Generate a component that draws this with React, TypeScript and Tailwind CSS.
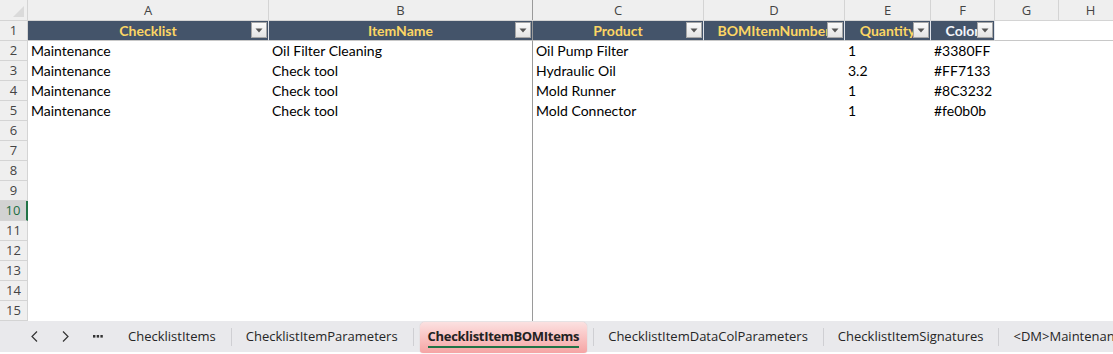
import React from 'react';

const cols = [
  { key: 'A', w: 241, title: 'Checklist' },
  { key: 'B', w: 264, title: 'ItemName', frozen: true },
  { key: 'C', w: 171, title: 'Product' },
  { key: 'D', w: 141, title: 'BOMItemNumber' },
  { key: 'E', w: 86, title: 'Quantity' },
  { key: 'F', w: 64, title: 'Color', white: true },
  { key: 'G', w: 64 },
  { key: 'H', w: 64 },
];

const rows: string[][] = [
  ['Maintenance', 'Oil Filter Cleaning', 'Oil Pump Filter', '', '1', '#3380FF'],
  ['Maintenance', 'Check tool', 'Hydraulic Oil', '', '3.2', '#FF7133'],
  ['Maintenance', 'Check tool', 'Mold Runner', '', '1', '#8C3232'],
  ['Maintenance', 'Check tool', 'Mold Connector', '', '1', '#fe0b0b'],
];

const tabs = [
  'ChecklistItems',
  'ChecklistItemParameters',
  'ChecklistItemBOMItems',
  'ChecklistItemDataColParameters',
  'ChecklistItemSignatures',
  '<DM>MaintenanceChecklists',
];

const FilterButton = () => (
  <div className="absolute right-[1px] top-[1px] w-[16px] h-[16px] border border-[#a6a6a6] bg-gradient-to-b from-[#fbfbfb] to-[#e3e3e3] flex items-center justify-center">
    <svg width="8" height="5" viewBox="0 0 8 5">
      <path d="M0.5 0.5 L7.5 0.5 L4 4.5 Z" fill="#555" />
    </svg>
  </div>
);

const App: React.FC = () => {
  const rowNums = Array.from({ length: 15 }, (_, i) => i + 1);
  return (
    <div className="w-[1113px] h-[354px] bg-white overflow-hidden font-['Lato',sans-serif] text-[14px] text-black">
      <div className="h-[321px] overflow-hidden">
        {/* Column letters */}
        <div className="flex h-[21px] bg-[#efefef] border-b border-[#d4d4d4]">
          <div className="w-[28px] shrink-0 border-r border-[#d4d4d4] relative">
            <svg className="absolute right-[3px] bottom-[3px]" width="11" height="11" viewBox="0 0 11 11">
              <path d="M11 0 L11 11 L0 11 Z" fill="#dadada" />
            </svg>
          </div>
          {cols.map((c) => (
            <div
              key={c.key}
              style={{ width: c.w }}
              className={`shrink-0 border-r ${c.frozen ? 'border-[#9a9a9a]' : 'border-[#d4d4d4]'} flex items-center justify-center text-[13px] text-[#444] font-['Open_Sans',sans-serif] pt-[1px]`}
            >
              {c.key}
            </div>
          ))}
        </div>

        {rowNums.map((n) => (
          <div key={n} className="flex h-[20px]">
            <div
              className={`w-[28px] shrink-0 border-b border-[#d4d4d4] flex items-center justify-center text-[13px] font-['Open_Sans',sans-serif] ${
                n === 10 ? 'bg-[#d2d2d2] text-[#1e6e42] border-r-2 border-r-[#217346]' : 'bg-[#efefef] text-[#444] border-r border-r-[#d4d4d4]'
              }`}
            >
              {n}
            </div>
            {cols.map((c, ci) => {
              if (n === 1) {
                return c.title ? (
                  <div
                    key={c.key}
                    style={{ width: c.w }}
                    className={`shrink-0 relative bg-[#44546a] border-r ${c.frozen ? 'border-[#9a9a9a]' : 'border-[#dfe3ea]'} border-b border-b-[#c8c8c8] overflow-hidden flex items-center justify-center font-bold whitespace-nowrap ${
                      c.white ? 'text-[#f4f6fb]' : 'text-[#fcd664]'
                    }`}
                  >
                    <span>{c.title}</span>
                    <FilterButton />
                  </div>
                ) : (
                  <div key={c.key} style={{ width: c.w }} className="shrink-0 border-b border-[#c8c8c8]" />
                );
              }
              const v = rows[n - 2]?.[ci] ?? '';
              return (
                <div
                  key={c.key}
                  style={{ width: c.w }}
                  className={`shrink-0 pl-[3px] pb-[2px] flex items-center whitespace-nowrap ${c.frozen ? 'border-r border-[#9a9a9a]' : ''}`}
                >
                  {v}
                </div>
              );
            })}
          </div>
        ))}
      </div>

      {/* Sheet tabs */}
      <div className="h-[33px] bg-[#e9e9ec] border-b-2 border-white flex items-center font-['Open_Sans',sans-serif] text-[13px] text-[#262626] whitespace-nowrap">
        <div className="w-[114px] shrink-0 flex items-center text-[#333]">
          <svg className="ml-[31px]" width="7" height="11" viewBox="0 0 7 11">
            <path d="M6 0.5 L1 5.5 L6 10.5" fill="none" stroke="#333" strokeWidth="1.2" />
          </svg>
          <svg className="ml-[24px]" width="7" height="11" viewBox="0 0 7 11">
            <path d="M1 0.5 L6 5.5 L1 10.5" fill="none" stroke="#333" strokeWidth="1.2" />
          </svg>
          <svg className="ml-[24px]" width="10" height="3" viewBox="0 0 10 3">
            <rect x="0" y="0" width="2.4" height="2.6" fill="#333" />
            <rect x="3.7" y="0" width="2.4" height="2.6" fill="#333" />
            <rect x="7.4" y="0" width="2.4" height="2.6" fill="#333" />
          </svg>
        </div>
        {tabs.map((t, i) => {
          const active = i === 2;
          return (
            <React.Fragment key={t}>
              {i > 0 && <div className="w-px h-[18px] shrink-0 bg-[#cfcfd3]" />}
              {active ? (
                <div className="mx-[6px] mt-[2px] h-[31px] px-[8px] shrink-0 rounded-t-[5px] rounded-b-[3px] bg-gradient-to-b from-[#fbe1e1] to-[#f5a4a4] shadow-[0_0_1px_#c9a0a0] flex flex-col items-center justify-center">
                  <span className="font-bold text-[#222] leading-[18px] tracking-[-0.3px]">{t}</span>
                  <div className="h-[2px] w-full bg-[#217346] mt-[1px]" />
                </div>
              ) : (
                <div className="pl-[14px] pr-[15px] shrink-0">{t}</div>
              )}
            </React.Fragment>
          );
        })}
      </div>
    </div>
  );
};

export default App;
